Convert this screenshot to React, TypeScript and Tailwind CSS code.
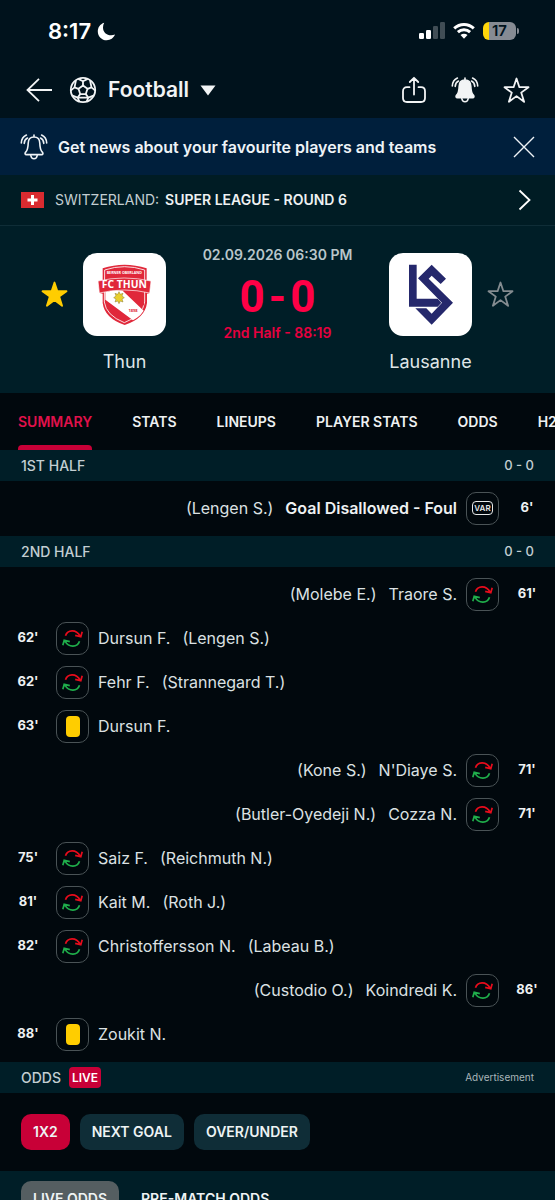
import type { ReactNode } from "react";

type MatchEvent = {
  side: "home" | "away";
  minute: string;
  kind: "sub" | "yellow" | "var";
  player: string;
  extra?: string;
};

const firstHalf: MatchEvent[] = [
  { side: "away", minute: "6'", kind: "var", player: "Goal Disallowed - Foul", extra: "(Lengen S.)" },
];

const secondHalf: MatchEvent[] = [
  { side: "away", minute: "61'", kind: "sub", player: "Traore S.", extra: "(Molebe E.)" },
  { side: "home", minute: "62'", kind: "sub", player: "Dursun F.", extra: "(Lengen S.)" },
  { side: "home", minute: "62'", kind: "sub", player: "Fehr F.", extra: "(Strannegard T.)" },
  { side: "home", minute: "63'", kind: "yellow", player: "Dursun F." },
  { side: "away", minute: "71'", kind: "sub", player: "N'Diaye S.", extra: "(Kone S.)" },
  { side: "away", minute: "71'", kind: "sub", player: "Cozza N.", extra: "(Butler-Oyedeji N.)" },
  { side: "home", minute: "75'", kind: "sub", player: "Saiz F.", extra: "(Reichmuth N.)" },
  { side: "home", minute: "81'", kind: "sub", player: "Kait M.", extra: "(Roth J.)" },
  { side: "home", minute: "82'", kind: "sub", player: "Christoffersson N.", extra: "(Labeau B.)" },
  { side: "away", minute: "86'", kind: "sub", player: "Koindredi K.", extra: "(Custodio O.)" },
  { side: "home", minute: "88'", kind: "yellow", player: "Zoukit N." },
];

const tabs = ["SUMMARY", "STATS", "LINEUPS", "PLAYER STATS", "ODDS", "H2H"];

function Bell({ filled = false }: { filled?: boolean }) {
  return (
    <svg width="28" height="28" viewBox="0 0 28 28" fill="none" stroke="currentColor" strokeWidth="1.6" strokeLinecap="round" strokeLinejoin="round">
      <path
        d="M14 2v2M14 4c-3.800 0-5.700 2.800-5.800 6.200-.1 4-.5 7-2.700 9.200-.9 1-.4 2.200.9 2.200h15.200c1.300 0 1.800-1.200.9-2.200-2.200-2.200-2.600-5.200-2.700-9.200C19.700 6.800 17.800 4 14 4z"
        fill={filled ? "currentColor" : "none"}
      />
      <path d="M10.800 22.500c.4 2.600 1.700 3.300 3.200 3.300s2.800-.7 3.200-3.300" />
      <path d="M6.400 2C3.300 3.400 1.500 6 1.300 10M7.500 5C5.500 6 4.400 7.800 4.200 10.400M21.600 2c3.100 1.400 4.900 4 5.100 8M20.500 5c2 1 3.100 2.800 3.300 5.400" />
    </svg>
  );
}

function Star({ filled = false }: { filled?: boolean }) {
  return (
    <svg width="27" height="27" viewBox="0 0 27 27" fill={filled ? "currentColor" : "none"} stroke="currentColor" strokeWidth="1.800" strokeLinejoin="round">
      <path d="M13.500 1.500l2.900 8.700h9.100l-7.300 5.400 2.900 9.200-7.600-5.700-7.600 5.700 2.900-9.200-7.300-5.400h9.100z" />
    </svg>
  );
}

function Football() {
  return (
    <svg width="28" height="28" viewBox="0 0 28 28" fill="none" stroke="currentColor" strokeWidth="1.800" strokeLinejoin="round">
      <circle cx="14" cy="14" r="12.200" />
      <path d="M14 9.500l4.500 3.300-1.700 5.300h-5.600l-1.700-5.300z" />
      <path d="M14 9.500V5.200M18.500 12.800l4-1.400M16.800 18.100l2.600 3.600M11.200 18.100l-2.600 3.600M9.500 12.800l-4-1.400" />
      <path d="M9.300 2.900L14 5.200l4.700-2.300M21 4.100l1.500 7.300 3.800 3.200M25.100 19.300l-5.700 2.400-1.900 4.100M8.600 21.700h10.800M10.500 25.800l-1.900-4.100-5.700-2.400M1.700 14.600l3.800-3.200L7 4.100" />
    </svg>
  );
}

function StatusBar() {
  return (
    <div className="flex h-[62px] shrink-0 items-center justify-between pr-9 pl-12">
      <div className="flex items-center gap-[6px] text-[22px] font-semibold">
        <span>8:17</span>
        <svg width="19" height="19" viewBox="0 0 19 19" fill="currentColor">
          <path d="M7.200.8C2.900 2.200.8 5.700.8 9.400c0 5 4 8.800 8.900 8.800 3.800 0 7-2.200 8.300-5.700-1.300.6-2.500.8-3.800.8-4.700 0-8.200-3.400-8.200-7.900 0-1.700.4-3.200 1.200-4.600z" />
        </svg>
      </div>
      <div className="flex items-center gap-2">
        <svg width="26" height="18" viewBox="0 0 26 18" fill="currentColor">
          <rect x="0" y="11" width="5" height="6" rx="1.200" />
          <rect x="7" y="8" width="5" height="9" rx="1.200" />
          <rect x="14" y="4" width="5" height="13" rx="1.200" opacity=".25" />
          <rect x="21" y="0" width="5" height="17" rx="1.200" opacity=".25" />
        </svg>
        <svg width="22" height="18" viewBox="0 0 22 18" fill="none" stroke="currentColor" strokeWidth="3">
          <path d="M1.200 6.300c5.600-5.200 14-5.200 19.600 0M4.900 10.200c3.500-3.200 8.700-3.200 12.200 0" />
          <path d="M7.500 13.100c2-1.800 5-1.800 7 0L11 16.800z" fill="currentColor" stroke="none" />
        </svg>
        <div className="flex items-center gap-px">
          <span className="flex h-[18px] w-[33px] items-center justify-center rounded-md bg-linear-to-r from-[#ffd60a] from-18% to-[#868b93] to-18% text-[15px] font-semibold text-[#00121c]">
            17
          </span>
          <span className="h-[6px] w-[2px] rounded-r-full bg-[#868b93]" />
        </div>
      </div>
    </div>
  );
}

function Header() {
  return (
    <header className="flex h-14 shrink-0 items-center justify-between pr-[25px] pl-[26px] text-[#f2f4f5]">
      <div className="flex items-center gap-4">
        <button aria-label="Back">
          <svg width="27" height="26" viewBox="0 0 27 26" fill="none" stroke="currentColor" strokeWidth="1.800">
            <path d="M26 13H1.500M13 1.800L1.500 13 13 24.200" />
          </svg>
        </button>
        <button className="flex items-center gap-[11px] text-[21px] font-semibold">
          <Football />
          <span>Football</span>
          <svg width="16" height="11" viewBox="0 0 16 11" fill="currentColor">
            <path d="M.5.500h15L8 10.500z" />
          </svg>
        </button>
      </div>
      <div className="flex items-center gap-6">
        <button aria-label="Share">
          <svg width="26" height="28" viewBox="0 0 26 28" fill="none" stroke="currentColor" strokeWidth="1.800" strokeLinecap="round" strokeLinejoin="round">
            <path d="M8.500 11.200H6c-2.600 0-4 1.500-4 4V22c0 2.600 1.500 4 4 4h14c2.600 0 4-1.500 4-4v-6.800c0-2.500-1.500-4-4-4h-2.500M13 18.500V1.800M8.800 6L13 1.800 17.200 6" />
          </svg>
        </button>
        <button aria-label="Notifications">
          <Bell filled />
        </button>
        <button aria-label="Favourite">
          <Star />
        </button>
      </div>
    </header>
  );
}

function ThunLogo() {
  return (
    <svg className="size-[83px] rounded-[14px] bg-white" viewBox="249 52 249 249">
      <path d="M308 98q65-22 132 0v38l12 1-4 36-7 1v28q-6 46-67 66-60-20-66-66v-28l-9-2-3-36 12-1z" fill="#e0283a" />
      <path d="M314 103q59-20 120 0v96q-5 40-61 62-55-22-60-62z" fill="none" stroke="#fff" strokeWidth="2.500" />
      <path d="M316 169q30-8 52-4l63 60q-8 13-20 21l-12 8-83-62z" fill="#fff" />
      <path d="M376 165q30 0 56 7v38z" fill="#e0283a" />
      <path d="M294 136q78-18 159 0l-4 36q-77-18-151 0z" fill="#e0283a" stroke="#fff" strokeWidth="2" />
      <text x="373" y="156" textAnchor="middle" fontSize="31" fontWeight="700" fill="#fff" fontFamily="Noto Sans, sans-serif">FC THUN</text>
      <text x="373" y="114" textAnchor="middle" fontSize="11" fontWeight="700" fill="#fff" fontFamily="Open Sans, sans-serif">BERNER OBERLAND</text>
      <text x="399" y="228" textAnchor="middle" fontSize="12" fontWeight="700" fill="#e0283a" fontFamily="Open Sans, sans-serif">1898</text>
      <path d="M357 168l4 8 8-3-3 8 7 5-7 4 3 9-8-3-4 8-4-8-8 3 3-9-7-4 7-5-3-8 8 3z" fill="#e8cf2d" stroke="#8b7a31" strokeWidth="1.500" />
    </svg>
  );
}

function LausanneLogo() {
  return (
    <svg className="size-[83px] rounded-[14px] bg-white" viewBox="87 52 249 249" fill="#25286c">
      <path d="M147 87h23v102h63l11 12-11 12h-86z" />
      <path d="M174 128l41-41 43 42-16 16-27-25-9 9 73 72-64 66-49-49h33l16 16 31-33z" />
    </svg>
  );
}

function Team({ name, logo }: { name: string; logo: ReactNode }) {
  return (
    <div className="flex w-[83px] flex-col items-center gap-[14px]">
      {logo}
      <span className="text-[18px] leading-6 whitespace-nowrap text-[#dfe6e8]">{name}</span>
    </div>
  );
}

function MatchCard() {
  return (
    <section className="flex shrink-0 items-start justify-between bg-[#001e27] px-[41px] pt-[19px] pb-[19px]">
      <div className="flex gap-[15px] pt-2">
        <button aria-label="Unfollow Thun" className="flex h-[83px] items-center text-[#ffcd00]">
          <Star filled />
        </button>
        <Team name="Thun" logo={<ThunLogo />} />
      </div>
      <div className="flex flex-col items-center whitespace-nowrap">
        <time className="text-sm leading-5 font-semibold text-[#b9c6ca]">02.09.2026 06:30 PM</time>
        <strong className="mt-2 flex gap-1 font-[Roboto,sans-serif] text-[44px] leading-12 font-bold text-[#ff0046]">
          <span>0</span>
          <span>-</span>
          <span>0</span>
        </strong>
        <span className="mt-0.5 text-sm leading-5 font-semibold text-[#e6003f]">2nd Half - 88:19</span>
      </div>
      <div className="flex gap-[15px] pt-2">
        <Team name="Lausanne" logo={<LausanneLogo />} />
        <button aria-label="Follow Lausanne" className="flex h-[83px] items-center text-[#848c90]">
          <Star />
        </button>
      </div>
    </section>
  );
}

function SectionBar({ title, children }: { title: ReactNode; children: ReactNode }) {
  return (
    <div className="flex h-[31px] shrink-0 items-center justify-between bg-[#001e27] px-[21px] text-sm font-medium text-[#c3ced2]">
      <h2 className="flex items-center gap-2">{title}</h2>
      {children}
    </div>
  );
}

function EventIcon({ kind }: { kind: MatchEvent["kind"] }) {
  return (
    <span className="flex size-[33px] shrink-0 items-center justify-center rounded-[10px] border border-[#4a5356]">
      {kind === "yellow" && <span className="h-[21px] w-[14px] rounded-[4px] bg-[#ffcd00]" />}
      {kind === "var" && (
        <span className="flex h-[14px] w-[21px] items-center justify-center rounded-[4px] border border-[#e6e9ea] text-[8px] leading-none font-semibold text-[#e6e9ea]">
          VAR
        </span>
      )}
      {kind === "sub" && (
        <svg width="21" height="19" viewBox="0 0 21 19" fill="none" strokeWidth="1.700">
          <path d="M3.500 6.800C5.500.6 14-.2 18.200 7.200M20.200 2.800l-1.400 5-5.600-1.400" stroke="#e80c1c" />
          <path d="M17.500 12.200C15.500 18.400 7 19.200 2.800 11.800M.8 16.200l1.400-5 5.600 1.400" stroke="#1fae4b" />
        </svg>
      )}
    </span>
  );
}

function EventList({ events }: { events: MatchEvent[] }) {
  return (
    <ul className="shrink-0 pt-[5px] pb-[6px]">
      {events.map((e) => (
        <li
          key={e.minute + e.player}
          className={e.side === "home" ? "flex h-11 items-center" : "flex h-11 flex-row-reverse items-center"}
        >
          <span className="w-14 text-center text-[13px] font-bold text-[#eef1f2]">{e.minute}</span>
          <EventIcon kind={e.kind} />
          <span
            className={
              e.side === "home"
                ? "ml-[9px] flex gap-3 text-base text-[#dce1e3]"
                : "mr-[9px] flex flex-row-reverse gap-3 text-base text-[#dce1e3]"
            }
          >
            <span className={e.kind === "var" ? "font-semibold text-[#eef1f2]" : ""}>{e.player}</span>
            {e.extra && <span>{e.extra}</span>}
          </span>
        </li>
      ))}
    </ul>
  );
}

function App() {
  return (
    <main className="flex h-screen flex-col overflow-hidden bg-[#01080d] font-[Inter,sans-serif] text-white">
      <div className="shrink-0 bg-[#00121c]">
        <StatusBar />
        <Header />
      </div>

      {/* News banner */}
      <div className="flex h-[57px] shrink-0 items-center bg-[#001f3c] pr-5 pl-5 text-[#eef3f7]">
        <Bell />
        <p className="ml-[10px] flex-1 text-base font-semibold">Get news about your favourite players and teams</p>
        <button aria-label="Close">
          <svg width="22" height="22" viewBox="0 0 22 22" fill="none" stroke="currentColor" strokeWidth="1.400">
            <path d="M1 1l20 20M21 1L1 21" />
          </svg>
        </button>
      </div>

      {/* League */}
      <a href="#league" className="flex h-[51px] shrink-0 items-center border-b border-[#0f2d37] bg-[#001c24] pr-6 pl-[21px] text-sm">
        <svg width="23" height="16" viewBox="0 0 23 16">
          <path d="M0 0h23v16H0z" fill="#d92b30" />
          <path d="M10 3h3v3.500h3.500v3H13V13h-3V9.500H6.500v-3H10z" fill="#fff" />
        </svg>
        <span className="ml-[11px] flex flex-1 gap-[6px] text-[#c3ced2]">
          <span>SWITZERLAND:</span>
          <b className="font-semibold text-[#eef1f2]">SUPER LEAGUE - ROUND 6</b>
        </span>
        <svg width="13" height="22" viewBox="0 0 13 22" fill="none" stroke="currentColor" strokeWidth="1.800">
          <path d="M1.500 1.500L11.500 11l-10 9.500" />
        </svg>
      </a>

      <MatchCard />

      <nav className="flex h-[57px] shrink-0 gap-10 px-[18px] text-sm font-semibold whitespace-nowrap text-[#eef1f2]">
        {tabs.map((t, i) => (
          <a
            key={t}
            href={"#" + t.toLowerCase().replace(" ", "-")}
            className={i === 0 ? "flex flex-col text-[#e0114b]" : "flex flex-col"}
          >
            <span className="flex flex-1 items-center">{t}</span>
            {i === 0 && <span className="-mt-[5px] h-[5px] rounded-t-sm bg-[#c80037]" />}
          </a>
        ))}
      </nav>

      <SectionBar title="1ST HALF">
        <span className="text-[13px]">0 - 0</span>
      </SectionBar>
      <EventList events={firstHalf} />

      <SectionBar title="2ND HALF">
        <span className="text-[13px]">0 - 0</span>
      </SectionBar>
      <EventList events={secondHalf} />

      <SectionBar
        title={
          <>
            ODDS
            <span className="rounded-[4px] bg-[#c80037] px-[3px] text-xs leading-[21px] font-semibold text-white">LIVE</span>
          </>
        }
      >
        <small className="text-[10px] font-normal text-[#aab6ba]">Advertisement</small>
      </SectionBar>

      <div className="flex shrink-0 gap-[10px] px-[21px] py-[21px] text-sm font-semibold text-[#eef3f4]">
        <button className="h-9 rounded-[10px] bg-[#c80037] px-3">1X2</button>
        <button className="h-9 rounded-[10px] bg-[#0f2d37] px-3">NEXT GOAL</button>
        <button className="h-9 rounded-[10px] bg-[#0f2d37] px-3">OVER/UNDER</button>
      </div>

      <div className="flex shrink-0 bg-[#001e27] px-[21px] py-[10px] text-sm font-semibold text-[#eef3f4]">
        <button className="h-9 rounded-[10px] bg-[#555e61] px-3">LIVE ODDS</button>
        <button className="h-9 rounded-[10px] px-[22px]">PRE-MATCH ODDS</button>
      </div>
    </main>
  );
}

export default App;
